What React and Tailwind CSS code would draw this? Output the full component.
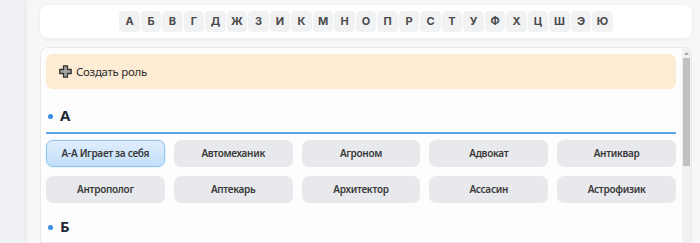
import React from 'react';

const letters = ['А', 'Б', 'В', 'Г', 'Д', 'Ж', 'З', 'И', 'К', 'М', 'Н', 'О', 'П', 'Р', 'С', 'Т', 'У', 'Ф', 'Х', 'Ц', 'Ш', 'Э', 'Ю'];

const rolesA = [
  'А-А Играет за себя',
  'Автомеханик',
  'Агроном',
  'Адвокат',
  'Антиквар',
  'Антрополог',
  'Аптекарь',
  'Архитектор',
  'Ассасин',
  'Астрофизик',
];

const PlusIcon = () => (
  <svg width="13" height="13" viewBox="0 0 13 13">
    <path
      d="M4.5 0.8h4v3.7h3.7v4h-3.7v3.7h-4v-3.7h-3.7v-4h3.7z"
      fill="#a3a3a3"
      stroke="#333"
      strokeWidth="1.3"
      strokeLinejoin="round"
    />
  </svg>
);

const SectionHeading = ({ letter, className = '' }) => (
  <div className={`flex items-center gap-[7px] h-[20px] ${className}`}>
    <span className="ml-[2px] mt-[3px] w-[5px] h-[5px] rounded-full bg-[#3b8fe0]"></span>
    <span className="text-[15px] leading-[20px] font-bold text-[#1f2937] font-['Open_Sans',sans-serif]">{letter}</span>
  </div>
);

export default function App() {
  return (
    <div className="w-full h-[243px] overflow-hidden flex bg-[#f7f7f7] font-['Noto_Sans',sans-serif]">
      {/* sidebar edge */}
      <div className="w-[25px] shrink-0 bg-[#eff1f4] shadow-[1px_0_3px_rgba(0,0,0,0.08)]"></div>

      <div className="flex-1 pl-[15px] pr-[8px] pt-[5px] flex flex-col">
        {/* alphabet bar */}
        <div className="h-[33px] rounded-[8px] bg-white shadow-[0_1px_4px_rgba(0,0,0,0.06)] flex items-center justify-center gap-px">
          {letters.map((l) => (
            <button
              key={l}
              className="w-[20.5px] h-[21px] rounded-[4px] bg-[#f1f2f4] text-[11px] font-bold text-[#4a4a4a] font-['Inter',sans-serif] flex items-center justify-center"
            >
              {l}
            </button>
          ))}
        </div>

        {/* roles panel */}
        <div className="mt-[9px] flex-1 flex border border-[#e9e9e9] rounded-t-[8px] bg-[#fdfdfd] overflow-hidden">
          <div className="flex-1 pl-[5px] pr-[6px] pt-[6px]">
            <div className="h-[35px] rounded-[7px] bg-[#fdebd4] flex items-center pl-[13px] gap-[4px]">
              <PlusIcon />
              <span className="text-[11.5px] tracking-[-0.3px] text-[#2d2d2d]">Создать роль</span>
            </div>

            <div className="mt-[16px] pb-[7px] border-b-2 border-[#5aa6e6]">
              <SectionHeading letter="А" />
            </div>

            <div className="mt-[6px] grid grid-cols-5 gap-[9px]">
              {rolesA.map((r, i) => (
                <button
                  key={r}
                  className={
                    i === 0
                      ? 'h-[27px] rounded-[7px] border border-[#8cc3f0] bg-gradient-to-b from-[#e0eefd] to-[#c2dffa] shadow-[0_0_2px_rgba(80,160,230,0.35)] text-[10px] tracking-[-0.3px] font-semibold text-[#3a3a3a]'
                      : 'h-[27px] rounded-[7px] bg-[#e7e9ec] text-[10px] tracking-[-0.3px] font-semibold text-[#3a3a3a]'
                  }
                >
                  {r}
                </button>
              ))}
            </div>

            <SectionHeading letter="Б" className="mt-[13px]" />
          </div>

          {/* scrollbar */}
          <div className="w-[9px] bg-[#f1f1f1] flex flex-col items-center">
            <div className="h-[10px] flex items-center justify-center">
              <svg width="5" height="3" viewBox="0 0 5 3">
                <path d="M0 3L2.5 0L5 3z" fill="#a3a3a3" />
              </svg>
            </div>
            <div className="w-[7px] h-[108px] bg-[#c1c1c1]"></div>
          </div>
        </div>
      </div>
    </div>
  );
}
